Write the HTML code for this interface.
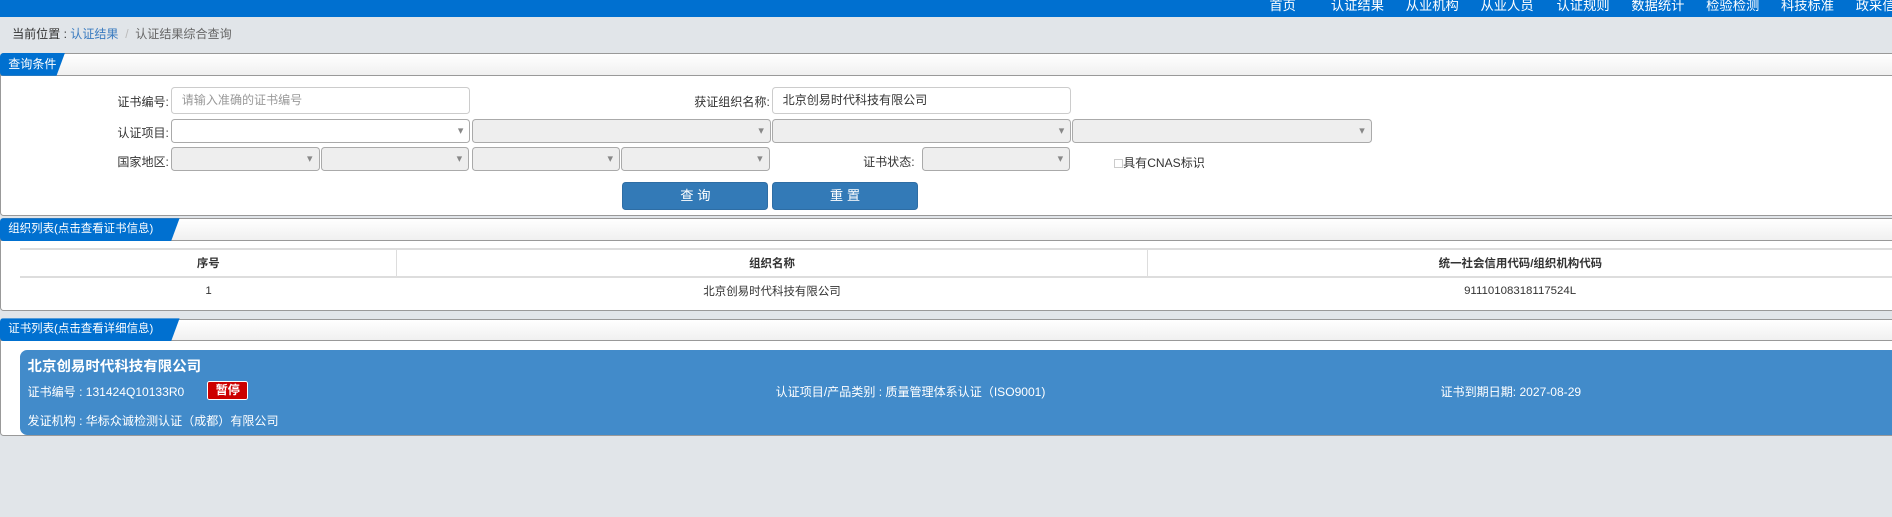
<!DOCTYPE html>
<html><head><meta charset="utf-8"><style>
*{box-sizing:border-box;margin:0;padding:0}
html,body{width:1892px;height:517px;overflow:hidden;background:#e1e5e9}
#w{zoom:1.20663;width:1568px;height:429px;position:relative;font-family:"Liberation Sans","Noto Sans CJK SC",sans-serif;font-size:10px;color:#333}
.a{position:absolute;white-space:nowrap}
.top{left:0;top:0;width:1568px;height:14px;background:#0070d0;overflow:hidden}
.top span{position:absolute;top:-4px;color:#fff;font-size:11px}
.panel{position:absolute;left:0;width:1568px;background:#fff;border:1px solid #999;border-right:none;border-radius:3px 0 0 3px}
.ph{position:absolute;left:0;top:0;width:100%;height:18px;background:linear-gradient(#fff,#f0f0f0);border-bottom:1px solid #999}
.tab{position:absolute;left:-1px;top:-1px;height:19px;background:#0070d0;color:#fff;font-size:10px;line-height:19px;padding-left:7px;border-radius:3px 0 0 3px;clip-path:polygon(0 0,100% 0,calc(100% - 7px) 100%,0 100%)}
.lbl{position:absolute;text-align:right;font-size:10px}
.in{position:absolute;height:23px;border:1px solid #ccc;border-radius:3px;background:#fff;font-size:10px;line-height:21px;padding-left:8px}
.sel{position:absolute;height:20px;border:1px solid #aaa;border-radius:3px;background:#eee}
.sel:after{content:"▾";position:absolute;right:5px;top:3px;font-size:9px;color:#888}
.btn{position:absolute;height:23px;width:121px;background:#337ab7;border:1px solid #2e6da4;border-radius:3px;color:#fff;text-align:center;line-height:21px;font-size:11px}
table{position:absolute;left:16px;top:24px;width:1552px;border-collapse:collapse;font-size:9.5px}
td{border-top:2px solid #ddd;text-align:center;height:23px}
th{border-top:2px solid #ddd;border-right:1px solid #ddd;font-weight:bold;height:23px;font-size:9.5px}
.card{position:absolute;left:16px;top:25px;width:1552px;height:71px;background:#428bca;border-radius:6px 0 0 6px;color:#fff;font-size:10px}
</style></head><body><div id="w">
<div class="a top">
<span style="left:1052px">首页</span><span style="left:1103px">认证结果</span><span style="left:1165px">从业机构</span><span style="left:1227px">从业人员</span><span style="left:1290px">认证规则</span><span style="left:1352px">数据统计</span><span style="left:1414px">检验检测</span><span style="left:1476px">科技标准</span><span style="left:1538px">政采信息</span>
</div>
<div class="a" style="left:10px;top:21px;font-size:10px;color:#333">当前位置 : <span style="color:#3a7bc0">认证结果</span> <span style="color:#bbb">&nbsp;/&nbsp;</span> <span style="color:#666">认证结果综合查询</span></div>

<div class="panel" style="top:44px;height:135px">
<div class="ph"></div><div class="tab" style="width:54px">查询条件</div>
<div class="lbl" style="right:1428px;top:32px">证书编号:</div>
<div class="in" style="left:141px;top:27px;width:248px;color:#999">请输入准确的证书编号</div>
<div class="lbl" style="right:930px;top:32px">获证组织名称:</div>
<div class="in" style="left:639px;top:27px;width:248px;color:#333">北京创易时代科技有限公司</div>
<div class="lbl" style="right:1428px;top:58px">认证项目:</div>
<div class="sel" style="left:141px;top:54px;width:248px;background:#fff"></div>
<div class="sel" style="left:390px;top:54px;width:248px"></div>
<div class="sel" style="left:639px;top:54px;width:248px"></div>
<div class="sel" style="left:888px;top:54px;width:248px"></div>
<div class="lbl" style="right:1428px;top:82px">国家地区:</div>
<div class="sel" style="left:141px;top:77px;width:123px"></div>
<div class="sel" style="left:265px;top:77px;width:123px"></div>
<div class="sel" style="left:390px;top:77px;width:123px"></div>
<div class="sel" style="left:514px;top:77px;width:123px"></div>
<div class="lbl" style="right:810px;top:82px">证书状态:</div>
<div class="sel" style="left:763px;top:77px;width:123px"></div>
<div class="a" style="left:922px;top:83px;font-size:10px"><span style="display:inline-block;width:8px;height:8px;border:1px solid #ccc;vertical-align:-1px"></span>具有CNAS标识</div>
<div class="btn" style="left:515px;top:106px">查 询</div>
<div class="btn" style="left:639px;top:106px">重 置</div>
</div>

<div class="panel" style="top:181px;height:77px">
<div class="ph"></div><div class="tab" style="width:149px;font-size:9.5px">组织列表(点击查看证书信息)</div>
<table><tr><th style="width:312px">序号</th><th style="width:622px">组织名称</th><th style="border-right:none">统一社会信用代码/组织机构代码</th></tr>
<tr><td>1</td><td>北京创易时代科技有限公司</td><td>91110108318117524L</td></tr></table>
</div>

<div class="panel" style="top:264px;height:97px">
<div class="ph"></div><div class="tab" style="width:149px;font-size:9.5px">证书列表(点击查看详细信息)</div>
<div class="card">
<div class="a" style="left:6px;top:4px;font-size:12px;font-weight:bold">北京创易时代科技有限公司</div>
<div class="a" style="left:6px;top:28px">证书编号 : 131424Q10133R0</div>
<div class="a" style="left:155px;top:26px;width:34px;height:16px;background:#c00;border:1px solid #fff;border-radius:2px;text-align:center;line-height:14px;font-weight:bold">暂停</div>
<div class="a" style="left:626px;top:28px">认证项目/产品类别 : 质量管理体系认证（ISO9001)</div>
<div class="a" style="left:1177px;top:28px">证书到期日期: 2027-08-29</div>
<div class="a" style="left:6px;top:52px">发证机构 : 华标众诚检测认证（成都）有限公司</div>
</div>
</div>
</div></body></html>
